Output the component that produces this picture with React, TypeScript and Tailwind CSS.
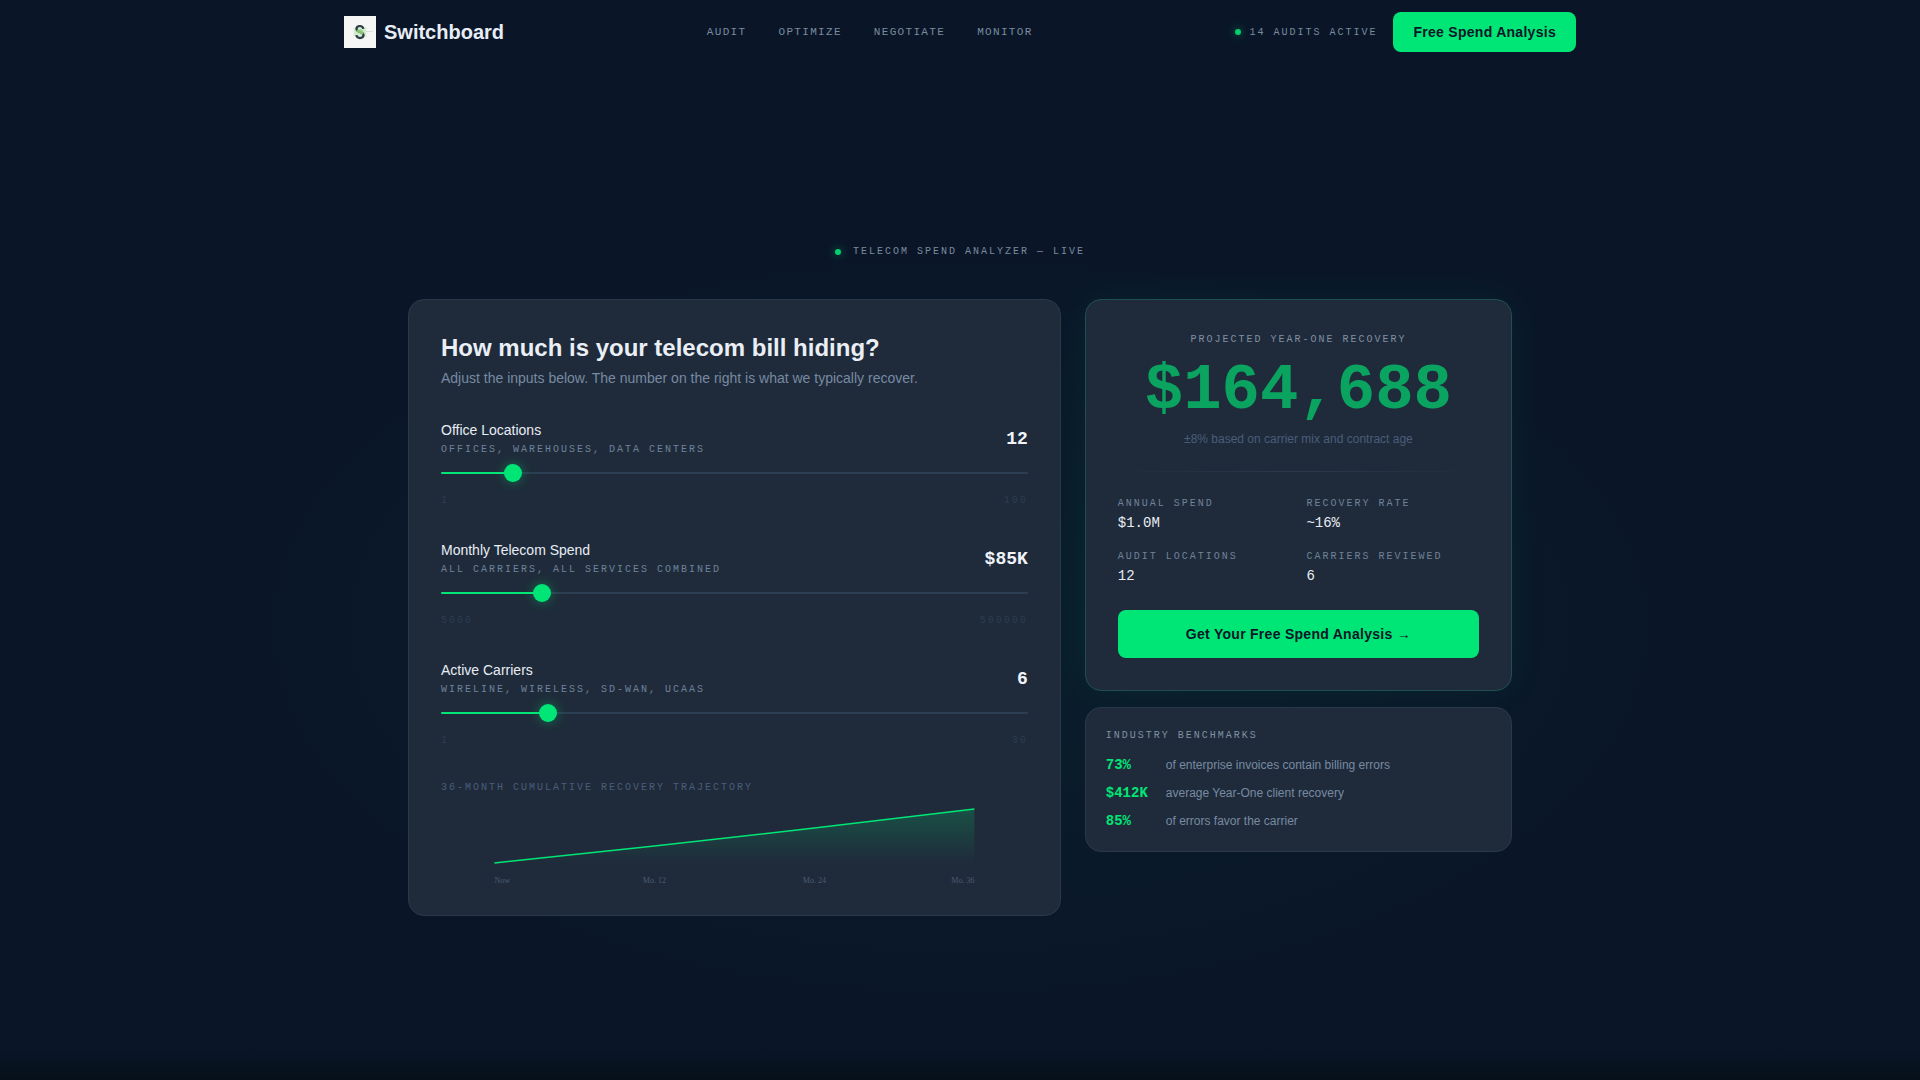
import React, { useState } from 'react';

interface SliderFieldProps {
  id: string;
  label: string;
  hint: string;
  min: number;
  max: number;
  step?: number;
  value: number;
  display: string;
  onChange: (value: number) => void;
}

const NAV_LINKS = ['Audit', 'Optimize', 'Negotiate', 'Monitor'];

const BENCHMARKS = [
  { value: '73%', text: 'of enterprise invoices contain billing errors' },
  { value: '$412K', text: 'average Year-One client recovery' },
  { value: '85%', text: 'of errors favor the carrier' },
];

const Logo: React.FC = () => (
  <svg className="w-8 h-8" viewBox="0 0 32 32" fill="none" aria-hidden="true">
    <rect width="32" height="32" fill="#f5f6f5" />
    <circle cx="16" cy="16" r="6.5" fill="#b4e2a6" fillOpacity="0.5" />
    <path d="M9.5 12.5h3M9 19.5h3M20 12h3M20 20h3M22 15.500h7" stroke="#a9cfa2" strokeOpacity="0.5" strokeWidth="0.8" />
    <path
      d="M19.300 12.800C19 10.900 17.800 10 16 10c-2.100 0-3.500 1.200-3.500 2.900 0 3.600 7 2.400 7 6.200 0 1.900-1.500 3-3.500 3-2 0-3.300-1-3.600-2.900"
      stroke="#2c3b49"
      strokeWidth="2.2"
    />
    <path d="M13 14.300c1.600 1.900 4.600 1.500 6.200 3.400" stroke="#86c776" strokeWidth="2.400" />
    <path d="M15.500 13.500l3.500 2" stroke="#9ad48b" strokeWidth="1.500" />
  </svg>
);

const StatusDot: React.FC = () => (
  <span className="w-1.5 h-1.5 rounded-full bg-[#00e676] opacity-90 shadow-[0_0_8px_rgba(0,230,118,0.6)]" />
);

const SliderField: React.FC<SliderFieldProps> = ({ id, label, hint, min, max, step = 1, value, display, onChange }) => {
  const percent = ((value - min) / (max - min)) * 100;

  return (
    <div>
      <div className="flex items-center justify-between">
        <label htmlFor={id} className="flex flex-col gap-0.5">
          <span className="text-sm text-[#e8edf5]">{label}</span>
          <span className="font-['Liberation_Mono',monospace] text-[10px] leading-[15px] tracking-[0.2em] uppercase text-[#70829a]">
            {hint}
          </span>
        </label>
        <output htmlFor={id} className="font-['Liberation_Mono',monospace] text-lg font-bold text-[#f0f4fa]">
          {display}
        </output>
      </div>
      <div className="mt-2 flex h-4 items-center">
        <input
          id={id}
          type="range"
          min={min}
          max={max}
          step={step}
          value={value}
          onChange={(e) => onChange(Number(e.target.value))}
          style={{ background: `linear-gradient(to right, #00e676 ${percent}%, #2b3e53 ${percent}%)` }}
          className="block h-0.5 w-full cursor-pointer appearance-none rounded-full outline-none [&::-webkit-slider-thumb]:h-[18px] [&::-webkit-slider-thumb]:w-[18px] [&::-webkit-slider-thumb]:appearance-none [&::-webkit-slider-thumb]:rounded-full [&::-webkit-slider-thumb]:bg-[#00e676] [&::-webkit-slider-thumb]:shadow-[0_0_12px_rgba(0,230,118,0.4)]"
        />
      </div>
      <div className="mt-3 flex justify-between font-['Liberation_Mono',monospace] text-[10px] leading-[15px] tracking-[0.2em] text-[#2d3d52]">
        <span>{min}</span>
        <span>{max}</span>
      </div>
    </div>
  );
};

const TrajectoryChart: React.FC = () => (
  <svg className="mt-2 h-20 w-full overflow-visible" viewBox="0 0 480 80" role="img" aria-label="36-month cumulative recovery">
    <defs>
      <linearGradient id="area" x1="0" y1="0" x2="0" y2="1">
        <stop offset="0%" stopColor="#00e676" stopOpacity="0.2" />
        <stop offset="100%" stopColor="#00e676" stopOpacity="0" />
      </linearGradient>
    </defs>
    <path d="M0 60 L160 43 L320 25 L480 6 L480 60 Z" fill="url(#area)" />
    <path d="M0 60 L160 43 L320 25 L480 6" fill="none" stroke="#00e676" strokeWidth="1.5" />
    <g className="font-['Liberation_Serif',serif] text-[8px]" fill="#4a5b75">
      <text x="0" y="80">Now</text>
      <text x="160" y="80" textAnchor="middle">Mo. 12</text>
      <text x="320" y="80" textAnchor="middle">Mo. 24</text>
      <text x="480" y="80" textAnchor="end">Mo. 36</text>
    </g>
  </svg>
);

const App: React.FC = () => {
  const [locations, setLocations] = useState(12);
  const [spend, setSpend] = useState(85000);
  const [carriers, setCarriers] = useState(6);

  const annual = spend * 12;
  const recovery = Math.round(annual * 0.161459);

  const stats = [
    { label: 'Annual Spend', value: `$${(annual / 1000000).toFixed(1)}M` },
    { label: 'Recovery Rate', value: '~16%' },
    { label: 'Audit Locations', value: String(locations) },
    { label: 'Carriers Reviewed', value: String(carriers) },
  ];

  return (
    <div className="flex min-h-screen flex-col bg-[#0a1628] bg-[linear-gradient(to_top,rgba(4,14,20,0.7),transparent_32px),radial-gradient(ellipse_38%_36%_at_50%_58%,rgba(0,230,118,0.04),transparent)] font-['Liberation_Sans',Arial,sans-serif] text-[#e8edf5]">
      <header>
        <div className="mx-auto flex h-16 max-w-7xl items-center justify-between px-6">
          <a href="#" className="flex items-center gap-2">
            <Logo />
            <span className="text-xl font-bold">Switchboard</span>
          </a>
          <nav className="flex items-center gap-8">
            {NAV_LINKS.map((link) => (
              <a
                key={link}
                href={`#${link.toLowerCase()}`}
                className="font-['Liberation_Mono',monospace] text-[11px] tracking-[0.12em] uppercase text-[#7a8a9f]"
              >
                {link}
              </a>
            ))}
          </nav>
          <div className="flex items-center gap-4">
            <div className="flex items-center gap-2">
              <StatusDot />
              <span className="font-['Liberation_Mono',monospace] text-[10px] leading-[15px] tracking-[0.2em] uppercase text-[#7a8a9f]">
                14 audits active
              </span>
            </div>
            <button className="h-10 rounded-lg bg-[#00e676] px-5 text-sm font-bold tracking-[0.02em] text-[#0a1628]">
              Free Spend Analysis
            </button>
          </div>
        </div>
      </header>

      <main className="flex flex-1 flex-col justify-center pt-4">
        <div className="mx-auto w-full max-w-6xl px-6">
          <div className="mb-10 flex items-center justify-center gap-3">
            <StatusDot />
            <span className="font-['Liberation_Mono',monospace] text-[10px] leading-[15px] tracking-[0.2em] uppercase text-[#7a8a9f]">
              Telecom Spend Analyzer — Live
            </span>
          </div>

          <div className="grid grid-cols-5 items-start gap-6">
            {/* Inputs */}
            <section className="col-span-3 rounded-2xl border border-[#2a394a] bg-[#1f2b3a] p-8">
              <h1 className="text-2xl font-bold text-[#eaeff6]">How much is your telecom bill hiding?</h1>
              <p className="mt-1 text-sm text-[#778aa3]">
                Adjust the inputs below. The number on the right is what we typically recover.
              </p>

              <div className="mt-8 flex flex-col gap-8">
                <SliderField
                  id="locations"
                  label="Office Locations"
                  hint="Offices, warehouses, data centers"
                  min={1}
                  max={100}
                  value={locations}
                  display={String(locations)}
                  onChange={setLocations}
                />
                <SliderField
                  id="spend"
                  label="Monthly Telecom Spend"
                  hint="All carriers, all services combined"
                  min={5000}
                  max={500000}
                  step={5000}
                  value={spend}
                  display={`$${Math.round(spend / 1000)}K`}
                  onChange={setSpend}
                />
                <SliderField
                  id="carriers"
                  label="Active Carriers"
                  hint="Wireline, wireless, SD-WAN, UCaaS"
                  min={1}
                  max={30}
                  value={carriers}
                  display={String(carriers)}
                  onChange={setCarriers}
                />
              </div>

              <div className="mt-8">
                <p className="font-['Liberation_Mono',monospace] text-[10px] leading-[15px] tracking-[0.2em] uppercase text-[#4a5d7a]">
                  36-month cumulative recovery trajectory
                </p>
                <TrajectoryChart />
              </div>
            </section>

            {/* Results */}
            <div className="col-span-2 flex flex-col gap-4">
              <section className="rounded-2xl border border-[#1e4f4e] bg-[#1f2b3a] p-8 shadow-[0_0_40px_rgba(0,230,118,0.06)]">
                <div className="text-center">
                  <p className="font-['Liberation_Mono',monospace] text-[10px] leading-[15px] tracking-[0.2em] uppercase text-[#7f90a6]">
                    Projected Year-One Recovery
                  </p>
                  <p className="mt-3 font-['Liberation_Mono',monospace] text-[64px] leading-none font-bold text-[#0ba360]">
                    ${recovery.toLocaleString('en-US')}
                  </p>
                  <p className="mt-2 text-xs text-[#4a5d7a]">±8% based on carrier mix and contract age</p>
                </div>

                <div className="my-6 h-px bg-linear-to-r from-transparent via-[#2a3a4c] to-transparent" />

                <dl className="grid grid-cols-2 gap-4">
                  {stats.map((stat) => (
                    <div key={stat.label}>
                      <dt className="font-['Liberation_Mono',monospace] text-[10px] leading-[15px] tracking-[0.2em] uppercase text-[#70829a]">
                        {stat.label}
                      </dt>
                      <dd className="mt-0.5 font-['Liberation_Mono',monospace] text-sm text-[#e8edf5]">{stat.value}</dd>
                    </div>
                  ))}
                </dl>

                <button className="mt-6 h-12 w-full rounded-lg bg-[#00e676] text-sm font-bold tracking-[0.02em] text-[#0a1628]">
                  Get Your Free Spend Analysis →
                </button>
              </section>

              <section className="rounded-2xl border border-[#2a394a] bg-[#1f2b3a] p-5">
                <h2 className="font-['Liberation_Mono',monospace] text-[10px] leading-[15px] tracking-[0.2em] uppercase text-[#7f90a6]">
                  Industry Benchmarks
                </h2>
                <ul className="mt-3 flex flex-col gap-2">
                  {BENCHMARKS.map((item) => (
                    <li key={item.value} className="flex items-center gap-3">
                      <span className="w-12 font-['Liberation_Mono',monospace] text-sm font-bold text-[#00e676]">{item.value}</span>
                      <span className="text-xs text-[#778aa3]">{item.text}</span>
                    </li>
                  ))}
                </ul>
              </section>
            </div>
          </div>
        </div>
      </main>
    </div>
  );
};

export default App;
